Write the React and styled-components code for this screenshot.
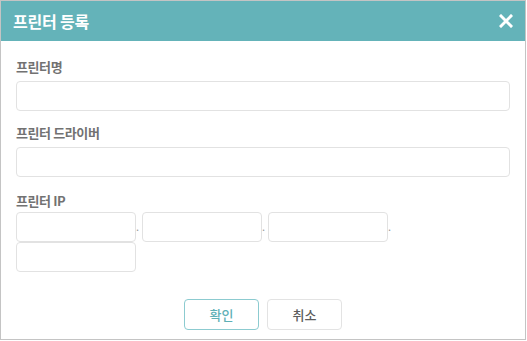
import React from "react";
import styled, { createGlobalStyle } from "styled-components";

const Global = createGlobalStyle`
  html, body { margin: 0; padding: 0; background: #ffffff; }
  body { font-family: "Noto Sans CJK KR", "Noto Sans", sans-serif; }
  * { box-sizing: border-box; }
`;

const Dialog = styled.div`
  width: 526px;
  height: 340px;
  border: 1px solid #c4c4c4;
  background: #fff;
  display: flex;
  flex-direction: column;
  overflow: hidden;
`;

const Header = styled.div`
  flex: 0 0 40px;
  height: 40px;
  background: #64b3b9;
  display: flex;
  align-items: center;
  justify-content: space-between;
  padding: 0 11px 0 12px;
`;

const Title = styled.h1`
  margin: 0;
  font-size: 16px;
  font-weight: 700;
  color: #ffffff;
  letter-spacing: -0.2px;
  line-height: 20px;
`;

const Close = styled.button`
  border: 0;
  background: none;
  padding: 0;
  width: 16px;
  height: 16px;
  display: flex;
  align-items: center;
  justify-content: center;
  cursor: pointer;
`;

const Body = styled.div`
  flex: 1 0 auto;
  padding: 16px 15px 0 15px;
  display: flex;
  flex-direction: column;
`;

const Field = styled.div`
  display: flex;
  flex-direction: column;
  flex-shrink: 0;
  margin-bottom: ${(p) => p.$mb ?? 12}px;
`;

const Label = styled.label`
  display: block;
  font-size: 13px;
  font-weight: 700;
  color: #727272;
  line-height: 20px;
  height: 20px;
  letter-spacing: -0.4px;
  margin-bottom: ${(p) => p.$mb ?? 4}px;
`;

const Input = styled.input`
  flex-shrink: 0;
  height: 30px;
  width: ${(p) => p.$w || "100%"};
  border: 1px solid #e2e2e2;
  border-radius: 4px;
  padding: 0 8px;
  font-size: 13px;
  font-family: inherit;
  color: #333;
  outline: none;
  background: #fff;
`;

const IpRow = styled.div`
  display: flex;
  flex-wrap: wrap;
  width: 100%;
`;

const IpPart = styled.div`
  display: flex;
  align-items: flex-end;
  height: 30px;
`;

const Sep = styled.span`
  width: 6px;
  font-size: 11px;
  line-height: 12px;
  color: #999;
  padding: 0 0 10px 0;
`;

const Footer = styled.div`
  display: flex;
  justify-content: center;
  gap: 8px;
  margin-top: 27px;
  flex-shrink: 0;
`;

const Button = styled.button`
  width: 75px;
  height: 31px;
  border-radius: 4px;
  background: #fff;
  font-family: inherit;
  font-size: 13px;
  font-weight: 500;
  cursor: pointer;
  padding: 0;
  border: 1px solid ${(p) => (p.$primary ? "#8ccbd0" : "#e3e3e3")};
  color: ${(p) => (p.$primary ? "#5eb0b6" : "#5c5c5c")};
`;

export default function App() {
  return (
    <>
      <Global />
      <Dialog>
        <Header>
          <Title>프린터 등록</Title>
          <Close aria-label="닫기">
            <svg width="14" height="14" viewBox="0 0 14 14">
              <path d="M2 2 L12 12 M12 2 L2 12" stroke="#fff" strokeWidth="3" strokeLinecap="square" />
            </svg>
          </Close>
        </Header>
        <Body>
          <Field>
            <Label>프린터명</Label>
            <Input />
          </Field>
          <Field $mb={14}>
            <Label>프린터 드라이버</Label>
            <Input />
          </Field>
          <Field $mb={0}>
            <Label $mb={1}>프린터 IP</Label>
            <IpRow>
              <IpPart>
                <Input $w="120px" />
                <Sep>.</Sep>
              </IpPart>
              <IpPart>
                <Input $w="120px" />
                <Sep>.</Sep>
              </IpPart>
              <IpPart>
                <Input $w="120px" />
                <Sep>.</Sep>
              </IpPart>
              <IpPart>
                <Input $w="120px" />
              </IpPart>
            </IpRow>
          </Field>
          <Footer>
            <Button $primary>확인</Button>
            <Button>취소</Button>
          </Footer>
        </Body>
      </Dialog>
    </>
  );
}
